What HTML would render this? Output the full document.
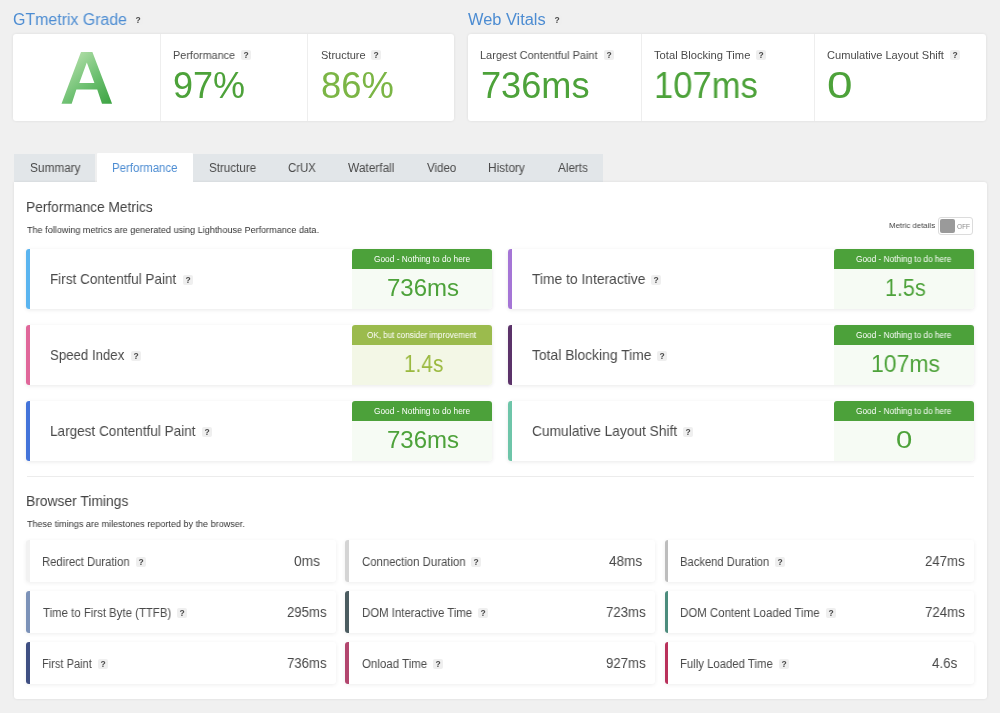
<!DOCTYPE html>
<html><head><meta charset="utf-8"><title>GTmetrix</title>
<style>
html,body{margin:0;padding:0}
body{width:1000px;height:713px;position:relative;overflow:hidden;background:#f0f0f0;font-family:"Liberation Sans",sans-serif;color:#444}
.t{position:absolute;white-space:nowrap;line-height:1;transform-origin:0 0;display:block;will-change:transform}
.card{position:absolute;background:#fff;border-radius:3px;box-shadow:0 0 3px rgba(0,0,0,.09)}
.div{position:absolute;width:1px;background:#eeeeee}
.tab{position:absolute;top:154px;height:27.5px;background:#e2e6e9}
.q{will-change:transform;position:absolute;width:10px;height:10px;background:#efefef;border-radius:2px;color:#4a4a4a;font-size:8.5px;font-weight:bold;line-height:11px;text-align:center}
.m{position:absolute;height:60px;background:#fff;border-radius:3px;box-shadow:0 1px 4px rgba(0,0,0,.09)}
.m i{position:absolute;left:0;top:0;bottom:0;width:3.7px;border-radius:3px 0 0 3px}
.b{position:absolute;width:140px;height:60px}
.b .h{position:absolute;left:0;top:0;width:140px;height:20px;border-radius:3px 3px 0 0;color:#fff;font-size:9px;line-height:20px;text-align:center;white-space:nowrap}
.b .v{position:absolute;left:0;top:20px;width:140px;height:40px;border-radius:0 0 3px 0;text-align:center;font-size:23px;line-height:38px}
.good .h{background:#4ca13a}.good .v{background:#f6fbf4;color:#4da23a}
.okk .h{background:#9bbb4d}.okk .v{background:#f3f7e6;color:#9ab93f}
.tm{position:absolute;width:309.75px;height:42px;background:#fff;border-radius:3px;box-shadow:0 1px 4px rgba(0,0,0,.07)}
.tm i{position:absolute;left:0;top:0;bottom:0;width:3.7px;border-radius:3px 0 0 3px}
</style></head><body>

<div class="card" style="left:13.4px;top:34.3px;width:441px;height:86.6px"></div>
<div class="div" style="left:160px;top:34px;height:87px"></div>
<div class="div" style="left:307px;top:34px;height:87px"></div>
<div class="card" style="left:468px;top:34.3px;width:518.4px;height:86.6px"></div>
<div class="div" style="left:641px;top:34px;height:87px"></div>
<div class="div" style="left:814px;top:34px;height:87px"></div>
<svg id="gradeA" style="position:absolute;left:0;top:0" width="160" height="121" viewBox="0 0 160 121"><defs><linearGradient id="ga" gradientUnits="userSpaceOnUse" x1="66" y1="58" x2="108" y2="104"><stop offset="0" stop-color="#b8e1ad"/><stop offset="0.5" stop-color="#72c275"/><stop offset="1" stop-color="#3fa545"/></linearGradient></defs><path fill="url(#ga)" fill-rule="evenodd" d="M61.5,103.7 L81,52.1 L92.4,52.1 L112.1,103.7 L102,103.7 L97.2,89.5 L76.4,89.5 L71.7,103.7 Z M79.3,82.9 L94.4,82.9 L86.8,62.6 Z"/></svg>
<div class="tab" style="left:13.5px;width:81.8px"></div>
<div class="tab" style="left:193px;width:410px"></div>
<div style="position:absolute;left:96.6px;top:152.8px;width:96.6px;height:31px;background:#fff;border-radius:1px 1px 0 0"></div>
<div class="card" style="left:13.5px;top:181.5px;width:973.3px;height:517.8px;border-radius:0 3px 3px 3px"></div>
<div style="position:absolute;left:97px;top:180px;width:96px;height:6px;background:#fff"></div>
<div style="position:absolute;left:937.5px;top:217.2px;width:33px;height:15.8px;border:1px solid #dcdcdc;border-radius:3px;background:#fff"></div>
<div style="position:absolute;left:940px;top:219.2px;width:14.8px;height:13.6px;background:#9a9a9a;border-radius:2px"></div>
<div style="position:absolute;left:27px;top:476px;width:947px;height:1px;background:#ececec"></div>
<div class="m" style="left:26px;top:248.6px;width:466px"><i style="background:#5ab4ef"></i></div>
<div class="b good" style="left:352px;top:248.6px"><div class="v"></div><div class="h"></div></div>
<div class="m" style="left:508px;top:248.6px;width:466px"><i style="background:#a575d6"></i></div>
<div class="b good" style="left:834px;top:248.6px"><div class="v"></div><div class="h"></div></div>
<div class="m" style="left:26px;top:324.6px;width:466px"><i style="background:#e0679a"></i></div>
<div class="b okk" style="left:352px;top:324.6px"><div class="v"></div><div class="h"></div></div>
<div class="m" style="left:508px;top:324.6px;width:466px"><i style="background:#5b3269"></i></div>
<div class="b good" style="left:834px;top:324.6px"><div class="v"></div><div class="h"></div></div>
<div class="m" style="left:26px;top:400.6px;width:466px"><i style="background:#4373d9"></i></div>
<div class="b good" style="left:352px;top:400.6px"><div class="v"></div><div class="h"></div></div>
<div class="m" style="left:508px;top:400.6px;width:466px"><i style="background:#6ec5a9"></i></div>
<div class="b good" style="left:834px;top:400.6px"><div class="v"></div><div class="h"></div></div>
<div class="tm" style="left:26.0px;top:540px"><i style="background:#f2f2f2"></i></div>
<div class="tm" style="left:345.25px;top:540px"><i style="background:#d4d4d4"></i></div>
<div class="tm" style="left:664.5px;top:540px"><i style="background:#bdbdbd"></i></div>
<div class="tm" style="left:26.0px;top:591px"><i style="background:#7c92b8"></i></div>
<div class="tm" style="left:345.25px;top:591px"><i style="background:#4b5c60"></i></div>
<div class="tm" style="left:664.5px;top:591px"><i style="background:#4c8c7d"></i></div>
<div class="tm" style="left:26.0px;top:642px"><i style="background:#3f4f82"></i></div>
<div class="tm" style="left:345.25px;top:642px"><i style="background:#b2466e"></i></div>
<div class="tm" style="left:664.5px;top:642px"><i style="background:#b9315b"></i></div>
<span class="t" id="t0" style="left:13.25px;top:11.96px;font-size:16px;color:#4c8cd2;transform:scaleX(0.9934)">GTmetrix Grade</span>
<span class="t" id="t1" style="left:468.00px;top:11.96px;font-size:16px;color:#4c8cd2;transform:scaleX(1.0233)">Web Vitals</span>
<span class="t" id="t2" style="left:173.26px;top:49.69px;font-size:11px;color:#4a4a4a;transform:scaleX(0.9878)">Performance</span>
<span class="t" id="t3" style="left:320.50px;top:49.69px;font-size:11px;color:#4a4a4a;transform:scaleX(0.9943)">Structure</span>
<span class="t" id="t4" style="left:480.00px;top:49.69px;font-size:11px;color:#4a4a4a;transform:scaleX(0.9957)">Largest Contentful Paint</span>
<span class="t" id="t5" style="left:654.15px;top:49.69px;font-size:11px;color:#4a4a4a;transform:scaleX(1.0170)">Total Blocking Time</span>
<span class="t" id="t6" style="left:827.00px;top:49.69px;font-size:11px;color:#4a4a4a;transform:scaleX(1.0065)">Cumulative Layout Shift</span>
<span class="t" id="t7" style="left:173.25px;top:68.03px;font-size:36px;color:#4da23a;transform:scaleX(1.0000)">97%</span>
<span class="t" id="t8" style="left:320.98px;top:68.03px;font-size:36px;color:#7bb545;transform:scaleX(1.0108)">86%</span>
<span class="t" id="t9" style="left:480.74px;top:68.03px;font-size:36px;color:#4da23a;transform:scaleX(1.0048)">736ms</span>
<span class="t" id="t10" style="left:654.36px;top:68.03px;font-size:36px;color:#4da23a;transform:scaleX(0.9615)">107ms</span>
<span class="t" id="t11" style="left:826.84px;top:68.03px;font-size:36px;color:#4da23a;transform:scaleX(1.2754)">0</span>
<span class="t" id="t12" style="left:29.51px;top:161.84px;font-size:12px;color:#4a4a4a;transform:scaleX(0.9852)">Summary</span>
<span class="t" id="t13" style="left:111.65px;top:161.84px;font-size:12px;color:#4c8cd2;transform:scaleX(0.9532)">Performance</span>
<span class="t" id="t14" style="left:209.02px;top:161.84px;font-size:12px;color:#4a4a4a;transform:scaleX(0.9686)">Structure</span>
<span class="t" id="t15" style="left:288.28px;top:161.84px;font-size:12px;color:#4a4a4a;transform:scaleX(0.9474)">CrUX</span>
<span class="t" id="t16" style="left:348.00px;top:161.84px;font-size:12px;color:#4a4a4a;transform:scaleX(0.9892)">Waterfall</span>
<span class="t" id="t17" style="left:427.00px;top:161.84px;font-size:12px;color:#4a4a4a;transform:scaleX(0.9583)">Video</span>
<span class="t" id="t18" style="left:487.76px;top:161.84px;font-size:12px;color:#4a4a4a;transform:scaleX(0.9862)">History</span>
<span class="t" id="t19" style="left:558.00px;top:161.84px;font-size:12px;color:#4a4a4a;transform:scaleX(0.9752)">Alerts</span>
<span class="t" id="t20" style="left:25.82px;top:199.73px;font-size:14.5px;color:#444;transform:scaleX(0.9470)">Performance Metrics</span>
<span class="t" id="t21" style="left:26.76px;top:224.66px;font-size:9.5px;color:#333;transform:scaleX(0.9533)">The following metrics are generated using Lighthouse Performance data.</span>
<span class="t" id="t22" style="left:889.07px;top:222.03px;font-size:8px;color:#444;transform:scaleX(0.9773)">Metric details</span>
<span class="t" id="t23" style="left:956.77px;top:222.57px;font-size:7px;color:#8a8a8a;transform:scaleX(0.9259)">OFF</span>
<span class="t" id="t24" style="left:25.81px;top:493.98px;font-size:14.5px;color:#444;transform:scaleX(0.9550)">Browser Timings</span>
<span class="t" id="t25" style="left:26.76px;top:518.66px;font-size:9.5px;color:#333;transform:scaleX(0.9527)">These timings are milestones reported by the browser.</span>
<span class="t" id="t26" style="left:50.33px;top:272.13px;font-size:14.5px;color:#4a4a4a;transform:scaleX(0.9328)">First Contentful Paint</span>
<span class="t" id="t27" style="left:50.12px;top:348.13px;font-size:14.5px;color:#4a4a4a;transform:scaleX(0.9124)">Speed Index</span>
<span class="t" id="t28" style="left:50.33px;top:424.13px;font-size:14.5px;color:#4a4a4a;transform:scaleX(0.9352)">Largest Contentful Paint</span>
<span class="t" id="t29" style="left:532.16px;top:272.13px;font-size:14.5px;color:#4a4a4a;transform:scaleX(0.9542)">Time to Interactive</span>
<span class="t" id="t30" style="left:532.16px;top:348.13px;font-size:14.5px;color:#4a4a4a;transform:scaleX(0.9565)">Total Blocking Time</span>
<span class="t" id="t31" style="left:531.69px;top:424.13px;font-size:14.5px;color:#4a4a4a;transform:scaleX(0.9484)">Cumulative Layout Shift</span>
<span class="t" id="t32" style="left:374.25px;top:254.87px;font-size:8.3px;color:#fff;transform:scaleX(1.0026)">Good - Nothing to do here</span>
<span class="t" id="t33" style="left:856.25px;top:254.87px;font-size:8.3px;color:#fff;transform:scaleX(0.9942)">Good - Nothing to do here</span>
<span class="t" id="t34" style="left:367.21px;top:330.87px;font-size:8.3px;color:#fff;transform:scaleX(0.9749)">OK, but consider improvement</span>
<span class="t" id="t35" style="left:856.25px;top:330.87px;font-size:8.3px;color:#fff;transform:scaleX(0.9942)">Good - Nothing to do here</span>
<span class="t" id="t36" style="left:374.25px;top:406.87px;font-size:8.3px;color:#fff;transform:scaleX(1.0026)">Good - Nothing to do here</span>
<span class="t" id="t37" style="left:856.25px;top:406.87px;font-size:8.3px;color:#fff;transform:scaleX(0.9942)">Good - Nothing to do here</span>
<span class="t" id="t38" style="left:386.97px;top:277.31px;font-size:23.5px;color:#4da23a;transform:scaleX(1.0226)">736ms</span>
<span class="t" id="t39" style="left:884.65px;top:277.31px;font-size:23.5px;color:#4da23a;transform:scaleX(0.9162)">1.5s</span>
<span class="t" id="t40" style="left:403.65px;top:353.31px;font-size:23.5px;color:#9ab93f;transform:scaleX(0.8862)">1.4s</span>
<span class="t" id="t41" style="left:870.79px;top:353.31px;font-size:23.5px;color:#4da23a;transform:scaleX(0.9779)">107ms</span>
<span class="t" id="t42" style="left:386.97px;top:429.31px;font-size:23.5px;color:#4da23a;transform:scaleX(1.0226)">736ms</span>
<span class="t" id="t43" style="left:896.26px;top:429.31px;font-size:23.5px;color:#4da23a;transform:scaleX(1.2444)">0</span>
<span class="t" id="t44" style="left:42.26px;top:556.34px;font-size:12px;color:#4a4a4a;transform:scaleX(0.9379)">Redirect Duration</span>
<span class="t" id="t45" style="left:362.03px;top:556.34px;font-size:12px;color:#4a4a4a;transform:scaleX(0.9469)">Connection Duration</span>
<span class="t" id="t46" style="left:680.37px;top:556.34px;font-size:12px;color:#4a4a4a;transform:scaleX(0.9344)">Backend Duration</span>
<span class="t" id="t47" style="left:42.96px;top:607.34px;font-size:12px;color:#4a4a4a;transform:scaleX(0.9500)">Time to First Byte (TTFB)</span>
<span class="t" id="t48" style="left:361.55px;top:607.34px;font-size:12px;color:#4a4a4a;transform:scaleX(0.9498)">DOM Interactive Time</span>
<span class="t" id="t49" style="left:680.34px;top:607.34px;font-size:12px;color:#4a4a4a;transform:scaleX(0.9550)">DOM Content Loaded Time</span>
<span class="t" id="t50" style="left:42.28px;top:658.34px;font-size:12px;color:#4a4a4a;transform:scaleX(0.9208)">First Paint</span>
<span class="t" id="t51" style="left:362.02px;top:658.34px;font-size:12px;color:#4a4a4a;transform:scaleX(0.9590)">Onload Time</span>
<span class="t" id="t52" style="left:680.35px;top:658.34px;font-size:12px;color:#4a4a4a;transform:scaleX(0.9451)">Fully Loaded Time</span>
<span class="t" id="t53" style="left:294.01px;top:554.45px;font-size:14px;color:#484848;transform:scaleX(0.9804)">0ms</span>
<span class="t" id="t54" style="left:609.26px;top:554.45px;font-size:14px;color:#484848;transform:scaleX(0.9701)">48ms</span>
<span class="t" id="t55" style="left:924.79px;top:554.45px;font-size:14px;color:#484848;transform:scaleX(0.9448)">247ms</span>
<span class="t" id="t56" style="left:287.09px;top:605.45px;font-size:14px;color:#484848;transform:scaleX(0.9423)">295ms</span>
<span class="t" id="t57" style="left:606.29px;top:605.45px;font-size:14px;color:#484848;transform:scaleX(0.9448)">723ms</span>
<span class="t" id="t58" style="left:925.09px;top:605.45px;font-size:14px;color:#484848;transform:scaleX(0.9497)">724ms</span>
<span class="t" id="t59" style="left:287.09px;top:656.45px;font-size:14px;color:#484848;transform:scaleX(0.9423)">736ms</span>
<span class="t" id="t60" style="left:606.29px;top:656.45px;font-size:14px;color:#484848;transform:scaleX(0.9448)">927ms</span>
<span class="t" id="t61" style="left:932.06px;top:656.45px;font-size:14px;color:#484848;transform:scaleX(0.9515)">4.6s</span>
<span class="q" style="left:241.30px;top:49.50px">?</span>
<span class="q" style="left:370.80px;top:49.50px">?</span>
<span class="q" style="left:603.80px;top:49.50px">?</span>
<span class="q" style="left:756.30px;top:49.50px">?</span>
<span class="q" style="left:950.30px;top:49.50px">?</span>
<span class="q" style="left:182.80px;top:274.90px">?</span>
<span class="q" style="left:130.55px;top:350.90px">?</span>
<span class="q" style="left:202.05px;top:426.90px">?</span>
<span class="q" style="left:651.30px;top:274.90px">?</span>
<span class="q" style="left:657.30px;top:350.90px">?</span>
<span class="q" style="left:683.10px;top:426.90px">?</span>
<span class="q" style="left:135.55px;top:557.00px">?</span>
<span class="q" style="left:471.30px;top:557.00px">?</span>
<span class="q" style="left:775.20px;top:557.00px">?</span>
<span class="q" style="left:176.80px;top:608.00px">?</span>
<span class="q" style="left:477.55px;top:608.00px">?</span>
<span class="q" style="left:825.60px;top:608.00px">?</span>
<span class="q" style="left:98.30px;top:659.00px">?</span>
<span class="q" style="left:433.05px;top:659.00px">?</span>
<span class="q" style="left:778.80px;top:659.00px">?</span>
<span class="q" style="left:132.90px;top:15.00px">?</span>
<span class="q" style="left:552.40px;top:15.00px">?</span>
</body></html>
